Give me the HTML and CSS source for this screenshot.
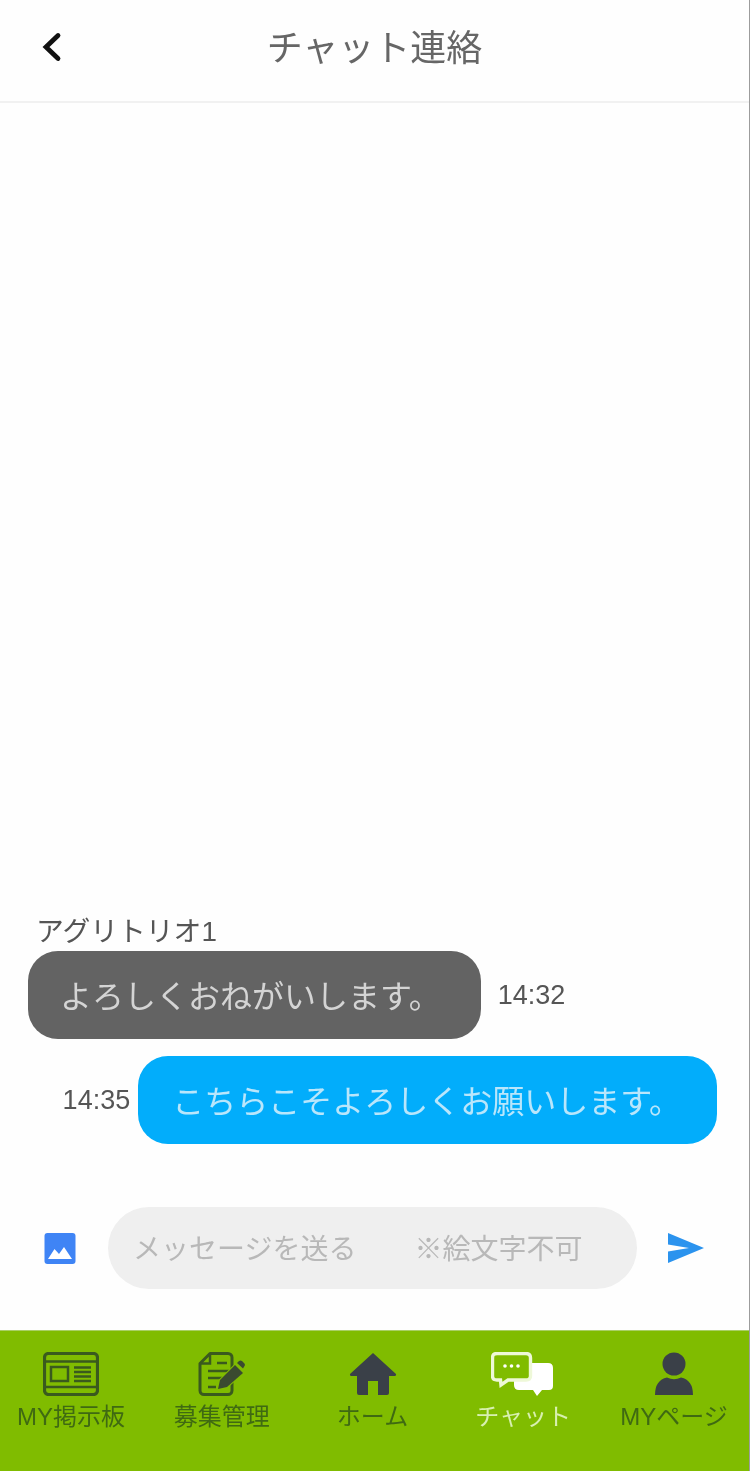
FILE: index.html
```html
<!DOCTYPE html>
<html lang="ja">
<head>
<meta charset="utf-8">
<title>チャット連絡</title>
<link rel="stylesheet" href="styles.css">
</head>
<body>
<div class="app">
  <header class="header">
    <svg class="back" viewBox="0 0 24 32" width="24" height="32"><path d="M18 4.500 L6 16 L18 27.500" fill="none" stroke="#111" stroke-width="4.800" stroke-linecap="round" stroke-linejoin="miter"/></svg>
    <h1 class="title">チャット連絡</h1>
  </header>
  <main class="messages">
    <div class="name">アグリトリオ1</div>
    <div class="row row-in">
      <div class="bubble bubble-in">よろしくおねがいします。</div>
      <span class="time">14:32</span>
    </div>
    <div class="row row-out">
      <span class="time">14:35</span>
      <div class="bubble bubble-out">こちらこそよろしくお願いします。</div>
    </div>
  </main>
  <div class="composer">
    <svg class="img-icon" viewBox="0 0 32 32" width="32" height="32"><rect x="0.500" y="0" width="31" height="31" rx="3" fill="#3f84f5"/><path d="M4 26 L10.500 16 L15 21 L20 14 L28 26 Z" fill="#fff"/></svg>
    <div class="field"><span>メッセージを送る</span><span class="note">※絵文字不可</span></div>
    <svg class="send-icon" viewBox="0 0 36 32" width="36" height="32"><path d="M0 1 L36 16 L0 31 L0 19.500 L21 16 L0 12.500 Z" fill="#2b93ee"/></svg>
  </div>
  <nav class="tabs">
    <div class="tab">
      <svg class="tab-icon" viewBox="0 0 56 44" width="56" height="44"><rect x="1.500" y="1.500" width="53" height="41" rx="4" fill="none" stroke="#3a5a1e" stroke-width="3.200"/><path d="M2 9.500 H54 M2 35 H54" stroke="#3a5a1e" stroke-width="2.500"/><rect x="8" y="15" width="17" height="14" fill="none" stroke="#3a5a1e" stroke-width="2.500"/><path d="M31 15.500 H48 M31 20 H48 M31 24.500 H48 M31 29 H48" stroke="#3a5a1e" stroke-width="2.600"/></svg>
      <span class="label">MY掲示板</span>
    </div>
    <div class="tab">
      <svg class="tab-icon" viewBox="0 0 48 44" width="48" height="44"><path d="M12 1.500 H30 A4 4 0 0 1 34 5.500 V38.500 A4 4 0 0 1 30 42.500 H6 A4 4 0 0 1 2 38.500 V11.500 Z" fill="none" stroke="#3a5a1e" stroke-width="3" stroke-linejoin="round"/><path d="M12 2 V11.500 H2.500" fill="none" stroke="#3a5a1e" stroke-width="2.500"/><path d="M19 11 H29 M10 19 H32 M10 26 H25 M10 35 H18" stroke="#3a5a1e" stroke-width="2.500"/><path d="M20 37 L22 28 L37 13 L45 21 L29 35 Z" fill="#3a4a30" stroke="#80bc00" stroke-width="2" paint-order="stroke"/><path d="M39 11 L41 9 Q42.500 8 44 9 L46.500 11.500 Q47.500 13 46.500 14 L45 16.500 Z" fill="#3a4a30"/></svg>
      <span class="label">募集管理</span>
    </div>
    <div class="tab">
      <svg class="tab-icon" viewBox="0 0 48 44" width="48" height="44"><path d="M24 1 L47 22 Q47.500 24 45 24 H40 V41 Q40 43 38 43 H29 V29 H19 V43 H10 Q8 43 8 41 V24 H3 Q0.500 24 1 22 Z" fill="#3a4048"/></svg>
      <span class="label">ホーム</span>
    </div>
    <div class="tab tab-active">
      <svg class="tab-icon" viewBox="0 0 64 44" width="64" height="44"><path d="M28 11 H57 Q62 11 62 16 V34 Q62 38 58 38 H51 L46 44 L42 38 H28 Q23 38 23 33 V16 Q23 11 28 11 Z" fill="#fff"/><path d="M6 1.500 H35 Q39.500 1.500 39.500 6 V24 Q39.500 28 35 28 H17 L10 33 L9.500 28 H6 Q1.500 28 1.500 24 V6 Q1.500 1.500 6 1.500 Z" fill="#80bc00" stroke="#eef8d8" stroke-width="3.400"/><circle cx="14" cy="14" r="1.800" fill="#fff"/><circle cx="20.500" cy="14" r="1.800" fill="#fff"/><circle cx="27" cy="14" r="1.800" fill="#fff"/></svg>
      <span class="label">チャット</span>
    </div>
    <div class="tab">
      <svg class="tab-icon" viewBox="0 0 40 44" width="40" height="44"><circle cx="20" cy="12" r="11.500" fill="#3a4048"/><path d="M1 43 Q1 28 13 25.500 Q20 29 27 25.500 Q39 28 39 43 Z" fill="#3a4048"/></svg>
      <span class="label">MYページ</span>
    </div>
  </nav>
</div>
</body>
</html>
```

FILE: styles.css
```css
* { box-sizing: border-box; }
html, body { margin: 0; padding: 0; }
body {
  font-family: "Liberation Sans", "Noto Sans CJK JP", sans-serif;
  background: #fff;
  color: #444;
  overflow: hidden;
}
.app {
  width: 750px;
  height: 1471px;
  display: flex;
  flex-direction: column;
  border-right: 1px solid #9c9c9c;
  background: #fefefe;
  overflow: hidden;
  filter: blur(0.5px);
}
.header {
  position: relative;
  height: 103px;
  flex: none;
  display: flex;
  align-items: center;
  justify-content: center;
  border-bottom: 2px solid #f1f1f1;
  padding-bottom: 4px;
}
.back {
  position: absolute;
  left: 40px;
  top: 31px;
}
.title {
  margin: 0;
  font-size: 36px;
  font-weight: 400;
  color: #666;
  line-height: 50px;
}
.messages {
  flex: 1;
  display: flex;
  flex-direction: column;
  justify-content: flex-end;
  padding-bottom: 64px;
}
.name {
  margin-left: 36px;
  font-size: 27.800px;
  line-height: 36px;
  color: #555;
  margin-bottom: 1px;
}
.row {
  display: flex;
  align-items: center;
}
.row-in {
  gap: 17px;
  padding-left: 28px;
  margin-bottom: 17px;
}
.row-out {
  justify-content: flex-end;
  gap: 8px;
  padding-right: 32px;
}
.bubble {
  height: 88px;
  border-radius: 30px;
  font-size: 32px;
  line-height: 92px;
  white-space: nowrap;
}
.bubble-in {
  background: #636363;
  color: #d4d4d4;
  padding: 0 40px 0 32px;
}
.bubble-out {
  background: #02adfb;
  color: #b9e6fb;
  padding: 0 36px 0 34px;
}
.time {
  font-size: 27px;
  color: #555;
}
.composer {
  flex: none;
  display: flex;
  align-items: center;
  height: 122px;
  padding-bottom: 42px;
  padding-left: 44px;
}
.img-icon { flex: none; margin-right: 32px; margin-top: 1px; }
.field {
  width: 529px;
  height: 82px;
  border-radius: 41px;
  background: #efefef;
  color: #b8b8b8;
  font-size: 28px;
  display: flex;
  align-items: center;
  gap: 58px;
  padding: 0 0 2px 25px;
}
.send-icon { flex: none; margin-left: 31px; }
.tabs {
  flex: none;
  height: 141px;
  background: #80bc00;
  display: flex;
  gap: 8.750px;
  border-top: 1px solid #a9cf66;
  padding: 21px 0 0 0;
}
.tab {
  width: 142px;
  flex: none;
  display: flex;
  flex-direction: column;
  align-items: center;
  color: #3f6a12;
}
.tab-icon { display: block; height: 44px; }
.label {
  font-size: 24px;
  line-height: 32px;
  margin-top: 5px;
  white-space: nowrap;
}
.tab-active { color: #d8f0b0; }
```
